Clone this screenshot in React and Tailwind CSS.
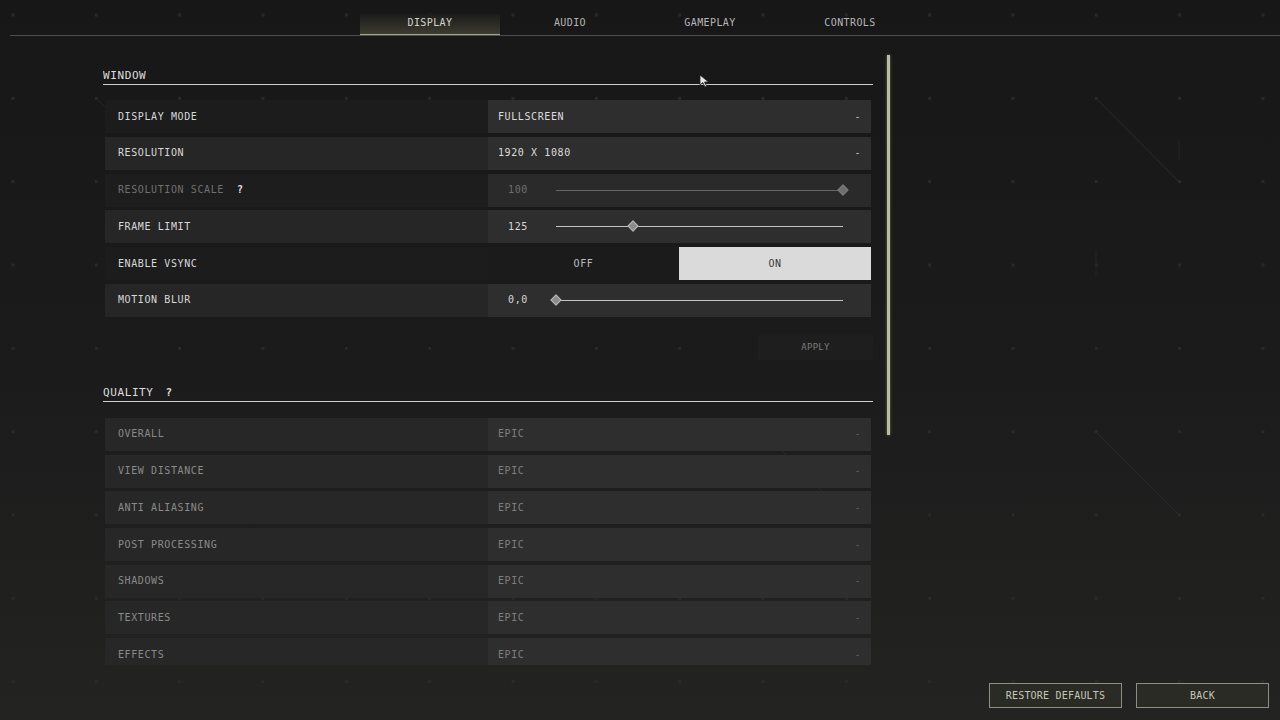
import React from "react";

const font = { fontFamily: '"DejaVu Sans Mono", "Liberation Mono", monospace' };

function Dash({ dim }) {
  return <span className={`text-[10px] ${dim ? "text-[#5e5e5e]" : "text-[#c4c4c4]"}`}>-</span>;
}

function Slider({ value, pct, dim }) {
  return (
    <div className="flex items-center h-full">
      <div className={`w-[44px] ml-[8px] text-center ${dim ? "text-[#6f6f6f]" : "text-[#d6d6d6]"}`}>{value}</div>
      <div className={`relative ml-[16px] w-[287px] h-px ${dim ? "bg-[#666666]" : "bg-[#c4c4c4]"}`}>
        <div
          className={`absolute top-[-4px] w-[8px] h-[8px] rotate-45 border ${dim ? "bg-[#6e6e6e] border-[#7c7c7c]" : "bg-[#8c8c8c] border-[#b8b8b8]"}`}
          style={{ left: `calc(${pct}% - 4px)` }}
        />
      </div>
    </div>
  );
}

function Row({ label, labelBg, labelColor, children, valueBg = "bg-[#2e2e2e]", help }) {
  return (
    <div className="flex h-[33px] shrink-0">
      <div className={`w-[383px] flex items-center pl-[13px] ${labelBg} ${labelColor}`}>
        <span>{label}</span>
        {help && <span className="ml-[13px] text-[#e0e0e0] font-bold">?</span>}
      </div>
      <div className={`w-[383px] ${valueBg}`}>{children}</div>
    </div>
  );
}

function Dropdown({ value, dim }) {
  return (
    <div className={`flex items-center justify-between h-full pl-[10px] pr-[10px] ${dim ? "text-[#7e7e7e]" : "text-[#dcdcdc]"}`}>
      <span>{value}</span>
      <Dash dim={dim} />
    </div>
  );
}

function Header({ title, help }) {
  return (
    <div className="shrink-0 text-[11px] tracking-[0.6px] text-[#dedede] leading-[14px] pb-[1px] border-b border-[#cfcfcf] flex">
      <span>{title}</span>
      {help && <span className="ml-[12px] font-bold">?</span>}
    </div>
  );
}

function Background() {
  const dots = [];
  for (let i = 0; i < 16; i++) {
    for (let j = 0; j < 9; j++) {
      const x = 13 + i * 83.33;
      const y = 15 + j * 83.33;
      dots.push(<rect key={`${i}-${j}`} x={x - 1.5} y={y - 1.5} width="3" height="3" fill="#2a2a2a" />);
    }
  }
  return (
    <svg className="absolute inset-0 pointer-events-none" width="1280" height="720">
      {dots}
      <line x1="1096" y1="98" x2="1179" y2="182" stroke="#2a2a2a" strokeWidth="1" />
      <line x1="1096" y1="432" x2="1179" y2="515" stroke="#2a2a2a" strokeWidth="1" />
      <line x1="96" y1="98" x2="130" y2="132" stroke="#262626" strokeWidth="1" />
      <line x1="763" y1="432" x2="846" y2="515" stroke="#292929" strokeWidth="1" />
      <line x1="1179" y1="140" x2="1179" y2="160" stroke="#252525" strokeWidth="1" />
      <line x1="1096" y1="250" x2="1096" y2="275" stroke="#242424" strokeWidth="1" />
    </svg>
  );
}

export default function App() {
  const tabs = ["DISPLAY", "AUDIO", "GAMEPLAY", "CONTROLS"];
  const quality = ["OVERALL", "VIEW DISTANCE", "ANTI ALIASING", "POST PROCESSING", "SHADOWS", "TEXTURES", "EFFECTS"];
  return (
    <div
      className="relative w-[1280px] h-[720px] overflow-hidden bg-linear-to-b from-[#171717] via-[#1b1b1b] to-[#232322] text-[10px] tracking-[0.6px] leading-[12px]"
      style={font}
    >
      <Background />

      {/* Tab bar */}
      <div className="relative ml-[10px] h-[36px] border-b border-[#4e4e4e] flex items-end">
        <div className="ml-[350px] flex">
          {tabs.map((t, i) => (
            <div
              key={t}
              className={`w-[140px] h-[21px] pt-[3px] text-center tracking-[0.4px] ${
                i === 0
                  ? "bg-linear-to-b from-[#1c1c1a] to-[#3c3c31] border-b border-[#a3a395] -mb-px text-[#d4d4cc]"
                  : "text-[#b6b6b6]"
              }`}
            >
              {t}
            </div>
          ))}
        </div>
      </div>

      {/* Main */}
      <div className="relative flex h-[629px]">
        <div className="ml-[103px] w-[770px] h-full overflow-hidden pt-[33px] flex flex-col">
          <Header title="WINDOW" />
          <div className="shrink-0 mt-[15px] ml-[2px] w-[766px] flex flex-col gap-[3.8px]">
            <Row label="DISPLAY MODE" labelBg="bg-[#1c1c1c]" labelColor="text-[#d8d8d8]">
              <Dropdown value="FULLSCREEN" />
            </Row>
            <Row label="RESOLUTION" labelBg="bg-[#262626]" labelColor="text-[#d8d8d8]">
              <Dropdown value="1920 X 1080" />
            </Row>
            <Row label="RESOLUTION SCALE" help labelBg="bg-[#1d1d1d]" labelColor="text-[#707070]" valueBg="bg-[#2a2a2a]">
              <Slider value="100" pct={100} dim />
            </Row>
            <Row label="FRAME LIMIT" labelBg="bg-[#262626]" labelColor="text-[#d8d8d8]">
              <Slider value="125" pct={26.8} />
            </Row>
            <Row label="ENABLE VSYNC" labelBg="bg-[#1c1c1c]" labelColor="text-[#d8d8d8]" valueBg="bg-transparent">
              <div className="flex h-full">
                <div className="w-[191px] flex items-center justify-center bg-[#1b1b1b] text-[#bdbdbd]">OFF</div>
                <div className="w-[192px] flex items-center justify-center bg-[#dadada] text-[#3a3a3a]">ON</div>
              </div>
            </Row>
            <Row label="MOTION BLUR" labelBg="bg-[#262626]" labelColor="text-[#d8d8d8]">
              <Slider value="0,0" pct={0} />
            </Row>
          </div>

          <div className="shrink-0 self-end mt-[18px] w-[115px] h-[25px] bg-[#1e1e1e] flex items-center justify-center text-[9px] tracking-[0.3px] text-[#7a7a7a]">
            APPLY
          </div>

          <div className="shrink-0 mt-[26px]">
            <Header title="QUALITY" help />
          </div>
          <div className="shrink-0 mt-[16px] ml-[2px] w-[766px] flex flex-col gap-[3.7px]">
            {quality.map((q) => (
              <Row key={q} label={q} labelBg="bg-[#272727]" labelColor="text-[#8a8a8a]" valueBg="bg-[#2e2e2e]">
                <Dropdown value="EPIC" dim />
              </Row>
            ))}
          </div>
        </div>

        {/* Scrollbar */}
        <div className="ml-[14px] mt-[19px] w-[3px] h-[380px] bg-[#babda3] shadow-[0_0_3px_#6b6e52]" />
      </div>

      {/* Footer buttons */}
      <div className="relative flex justify-end pr-[11px] pt-[18px] gap-[14px]">
        <div className="w-[133px] h-[25px] border border-[#8d8d84] bg-[#2a2b25] flex items-center justify-center text-[#c6c6b8] tracking-[0.2px]">
          RESTORE DEFAULTS
        </div>
        <div className="w-[133px] h-[25px] border border-[#8d8d84] bg-[#2a2b25] flex items-center justify-center text-[#c6c6b8] tracking-[0.2px]">
          BACK
        </div>
      </div>

      {/* Mouse cursor */}
      <svg className="absolute left-[699px] top-[74px] pointer-events-none" width="11" height="14" viewBox="0 0 11 14">
        <path d="M1 1 L1 11 L3.8 8.6 L6 13 L7.6 12.2 L5.5 8 L9.5 8 Z" fill="#e8e8e8" stroke="#222" strokeWidth="0.8" />
      </svg>
    </div>
  );
}
